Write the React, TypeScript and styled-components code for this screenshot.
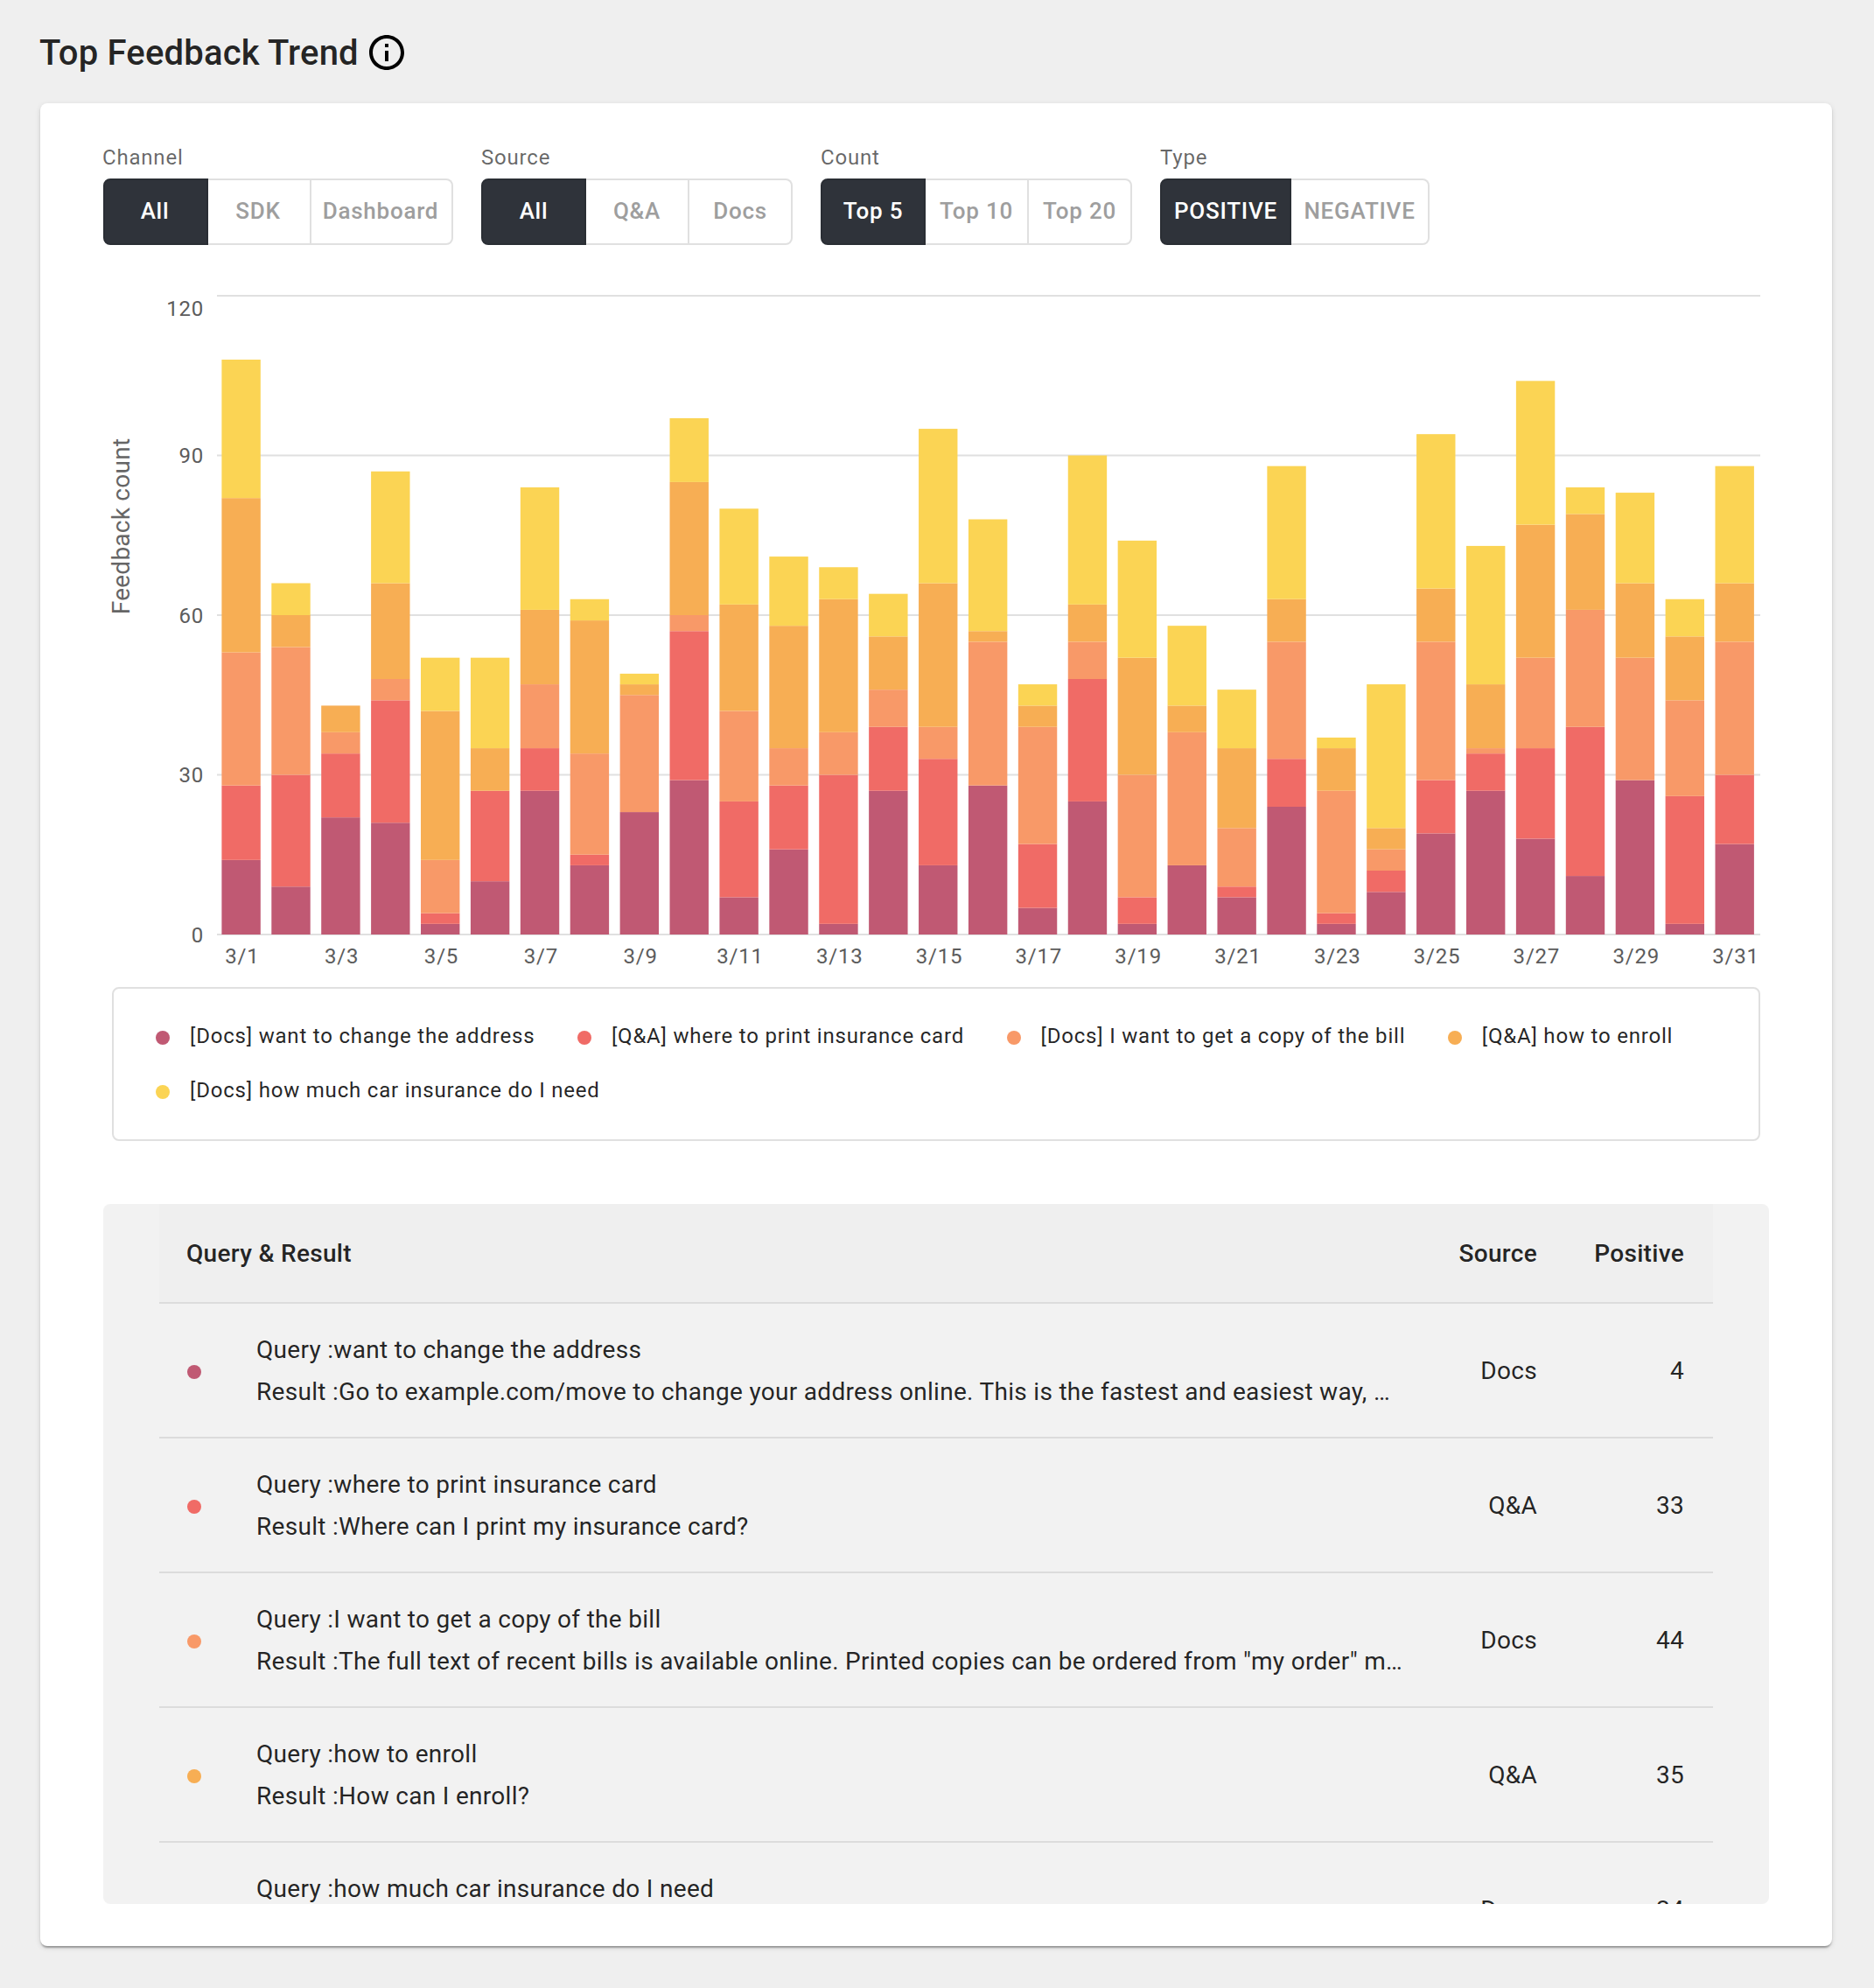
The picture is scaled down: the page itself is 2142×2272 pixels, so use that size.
import React from 'react';
import styled, { createGlobalStyle } from 'styled-components';

const GlobalStyle = createGlobalStyle`
  *, *::before, *::after { box-sizing: border-box; }
  body {
    margin: 0;
    background: #efefef;
    font-family: Roboto, "Liberation Sans", sans-serif;
    color: rgba(0, 0, 0, 0.87);
    -webkit-font-smoothing: antialiased;
  }
`;

const COLORS = ['#c05973', '#f06b66', '#f89968', '#f7ae54', '#fbd454'];

const Page = styled.main`
  width: 2142px;
  height: 2272px;
  padding: 28px 48px 0 46px;
  overflow: hidden;
`;

const Heading = styled.header`
  display: flex;
  align-items: center;
  gap: 8px;
  height: 64px;
`;

const Title = styled.h1`
  margin: 2px 0 0 -1px;
  font-size: 40px;
  font-weight: 500;
  line-height: 64px;
  letter-spacing: 0.18px;
`;

const InfoIcon = styled.svg`
  display: block;
  width: 48px;
  height: 48px;
  fill: #000;
`;

const Card = styled.section`
  margin-top: 26px;
  height: 2106px;
  padding: 44px 72px 48px;
  display: flex;
  flex-direction: column;
  background: #fff;
  border-radius: 8px;
  box-shadow: 0 4px 2px -2px rgba(0, 0, 0, 0.2), 0 2px 2px 0 rgba(0, 0, 0, 0.14),
    0 2px 6px 0 rgba(0, 0, 0, 0.12);
`;

const Filters = styled.div`
  display: flex;
  gap: 32px;
`;

const FilterGroup = styled.div``;

const FilterLabel = styled.div`
  height: 42px;
  line-height: 36px;
  font-size: 24px;
  letter-spacing: 0.8px;
  color: rgba(0, 0, 0, 0.6);
  ${FilterGroup}:first-child & { margin-left: -1px; }
`;

const ToggleGroup = styled.div`
  display: flex;
  height: 76px;
`;

const Toggle = styled.button<{ $selected: boolean; $width: number }>`
  width: ${(p) => p.$width}px;
  margin: 0;
  padding: 0 0 2px;
  border: 2px solid #e0e0e0;
  border-left-width: ${(p) => (p.$selected ? 2 : 0)}px;
  border-color: ${(p) => (p.$selected ? '#2a2e34' : '#e0e0e0')};
  background: ${(p) => (p.$selected ? '#2f333a' : '#fff')};
  color: ${(p) => (p.$selected ? '#fff' : '#9e9e9e')};
  font: 500 26px/45px Roboto, "Liberation Sans", sans-serif;
  letter-spacing: 0.75px;
  white-space: nowrap;
  &:first-child { border-radius: 8px 0 0 8px; }
  &:last-child { border-radius: 0 8px 8px 0; }
  ${FilterGroup}:first-child & { padding-right: 2px; }
`;

const Chart = styled.svg`
  display: block;
  flex: none;
  width: 1904px;
  height: 820px;
  margin-top: 28px;
  font-family: Roboto, "Liberation Sans", sans-serif;
`;

const Legend = styled.div`
  flex: none;
  display: flex;
  flex-wrap: wrap;
  align-content: flex-start;
  column-gap: 48.5px;
  height: 176px;
  margin: 0 10px;
  padding: 23px 48px;
  border: 2px solid #e0e0e0;
  border-radius: 8px;
`;

const LegendItem = styled.div`
  display: flex;
  align-items: center;
  gap: 23px;
  height: 62px;
  font-size: 24px;
  letter-spacing: 0.8px;
`;

const Dot = styled.span<{ $color: string }>`
  flex: none;
  display: block;
  width: 16px;
  height: 16px;
  margin-top: 4px;
  border-radius: 50%;
  background: ${(p) => p.$color};
`;

const TablePanel = styled.div`
  flex: none;
  width: 1904px;
  height: 800px;
  margin-top: 72px;
  padding: 0 64px;
  overflow: hidden;
  background: #f2f2f2;
  border-radius: 8px;
`;

const HeadRow = styled.div`
  display: grid;
  grid-template-columns: 1fr 138px 168px;
  align-items: center;
  height: 114px;
  padding: 0 33px 0 31px;
  background: #efefef;
  border-bottom: 2px solid #dcdcdc;
  font-size: 28px;
  font-weight: 500;
  letter-spacing: 0.3px;
`;

const BodyRow = styled.div`
  display: grid;
  grid-template-columns: 79px 1316px 1fr 168px;
  align-items: center;
  height: 154px;
  padding: 0 33px 0 32px;
  border-bottom: 2px solid #dcdcdc;
  font-size: 28px;
  letter-spacing: 0.3px;
`;

const Lines = styled.div`
  padding-top: 2px;
`;

const Line = styled.div`
  line-height: 48px;
  white-space: nowrap;
`;

const Cell = styled.div`
  text-align: right;
`;

// Cumulative height of each stacked series, one entry per day of March.
const DAYS: number[][] = [
  [14, 28, 53, 82, 108],
  [9, 30, 54, 60, 66],
  [22, 34, 38, 43, 43],
  [21, 44, 48, 66, 87],
  [2, 4, 14, 42, 52],
  [10, 27, 27, 35, 52],
  [27, 35, 47, 61, 84],
  [13, 15, 34, 59, 63],
  [23, 23, 45, 47, 49],
  [29, 57, 60, 85, 97],
  [7, 25, 42, 62, 80],
  [16, 28, 35, 58, 71],
  [2, 30, 38, 63, 69],
  [27, 39, 46, 56, 64],
  [13, 33, 39, 66, 95],
  [28, 28, 55, 57, 78],
  [5, 17, 39, 43, 47],
  [25, 48, 55, 62, 90],
  [2, 7, 30, 52, 74],
  [13, 13, 38, 43, 58],
  [7, 9, 20, 35, 46],
  [24, 33, 55, 63, 88],
  [2, 4, 27, 35, 37],
  [8, 12, 16, 20, 47],
  [19, 29, 55, 65, 94],
  [27, 34, 35, 47, 73],
  [18, 35, 52, 77, 104],
  [11, 39, 61, 79, 84],
  [29, 29, 52, 66, 83],
  [2, 26, 44, 56, 63],
  [17, 30, 55, 66, 88],
];

const FILTERS = [
  { label: 'Channel', options: ['All', 'SDK', 'Dashboard'], widths: [120, 118, 162] },
  { label: 'Source', options: ['All', 'Q&A', 'Docs'], widths: [120, 118, 118] },
  { label: 'Count', options: ['Top 5', 'Top 10', 'Top 20'], widths: [120, 118, 118] },
  { label: 'Type', options: ['POSITIVE', 'NEGATIVE'], widths: [150, 158] },
];

const LEGEND = [
  '[Docs] want to change the address',
  '[Q&A] where to print insurance card',
  '[Docs] I want to get a copy of the bill',
  '[Q&A] how to enroll',
  '[Docs] how much car insurance do I need',
];

const ROWS = [
  {
    query: 'want to change the address',
    result: 'Go to example.com/move to change your address online. This is the fastest and easiest way, …',
    source: 'Docs',
    count: 4,
  },
  { query: 'where to print insurance card', result: 'Where can I print my insurance card?', source: 'Q&A', count: 33 },
  {
    query: 'I want to get a copy of the bill',
    result: 'The full text of recent bills is available online. Printed copies can be ordered from "my order" m…',
    source: 'Docs',
    count: 44,
  },
  { query: 'how to enroll', result: 'How can I enroll?', source: 'Q&A', count: 35 },
  { query: 'how much car insurance do I need', result: 'How much insurance do I need?', source: 'Docs', count: 24 },
];

const LEFT = 130;
const RIGHT = 1894;
const BASE = 760;
const UNIT = 730 / 120;
const PITCH = (RIGHT - LEFT) / 31;
const yOf = (v: number) => BASE - v * UNIT;

function StackedBars() {
  return (
    <Chart viewBox="0 0 1904 820">
      {[0, 30, 60, 90, 120].map((v) => (
        <g key={v}>
          <line x1={LEFT} x2={RIGHT} y1={yOf(v)} y2={yOf(v)} stroke="#e0e0e0" strokeWidth="2" />
          <text
            x="115"
            y={v === 120 ? 53 : yOf(v) + 8.5}
            textAnchor="end"
            fontSize="24"
            letterSpacing="0.8"
            fill="#5c5c5c"
          >
            {v}
          </text>
        </g>
      ))}
      <text
        x="30"
        y="293.5"
        transform="rotate(-90 30 293.5)"
        textAnchor="middle"
        fontSize="28"
        letterSpacing="0.25"
        fill="#666"
      >
        Feedback count
      </text>
      {DAYS.map((stack, day) => {
        const x = LEFT + day * PITCH + 5.4;
        return (
          <g key={day}>
            {stack.map((top, s) => {
              const bottom = s === 0 ? 0 : stack[s - 1];
              return top > bottom ? (
                <rect key={s} x={x} y={yOf(top)} width="44.4" height={(top - bottom) * UNIT} fill={COLORS[s]} />
              ) : null;
            })}
            {day % 2 === 0 && (
              <text x={x + 23.5} y="793" textAnchor="middle" fontSize="24" letterSpacing="0.8" fill="#5c5c5c">
                {`3/${day + 1}`}
              </text>
            )}
          </g>
        );
      })}
    </Chart>
  );
}

export default function App() {
  return (
    <>
      <GlobalStyle />
      <Page>
        <Heading>
          <Title>Top Feedback Trend</Title>
          <InfoIcon viewBox="0 0 24 24">
            <path d="M11 7h2v2h-2zm0 4h2v6h-2zm1-9C6.48 2 2 6.48 2 12s4.48 10 10 10 10-4.48 10-10S17.52 2 12 2zm0 18c-4.41 0-8-3.59-8-8s3.59-8 8-8 8 3.59 8 8-3.59 8-8 8z" />
          </InfoIcon>
        </Heading>
        <Card>
          <Filters>
            {FILTERS.map((f) => (
              <FilterGroup key={f.label}>
                <FilterLabel>{f.label}</FilterLabel>
                <ToggleGroup>
                  {f.options.map((o, i) => (
                    <Toggle key={o} $selected={i === 0} $width={f.widths[i]}>
                      {o}
                    </Toggle>
                  ))}
                </ToggleGroup>
              </FilterGroup>
            ))}
          </Filters>
          <StackedBars />
          <Legend>
            {LEGEND.map((text, i) => (
              <LegendItem key={text}>
                <Dot $color={COLORS[i]} />
                <span>{text}</span>
              </LegendItem>
            ))}
          </Legend>
          <TablePanel>
            <HeadRow>
              <div>Query &amp; Result</div>
              <Cell>Source</Cell>
              <Cell>Positive</Cell>
            </HeadRow>
            {ROWS.map((r, i) => (
              <BodyRow key={r.query}>
                <Dot $color={COLORS[i]} />
                <Lines>
                  <Line>Query :{r.query}</Line>
                  <Line>Result :{r.result}</Line>
                </Lines>
                <Cell>{r.source}</Cell>
                <Cell>{r.count}</Cell>
              </BodyRow>
            ))}
          </TablePanel>
        </Card>
      </Page>
    </>
  );
}
